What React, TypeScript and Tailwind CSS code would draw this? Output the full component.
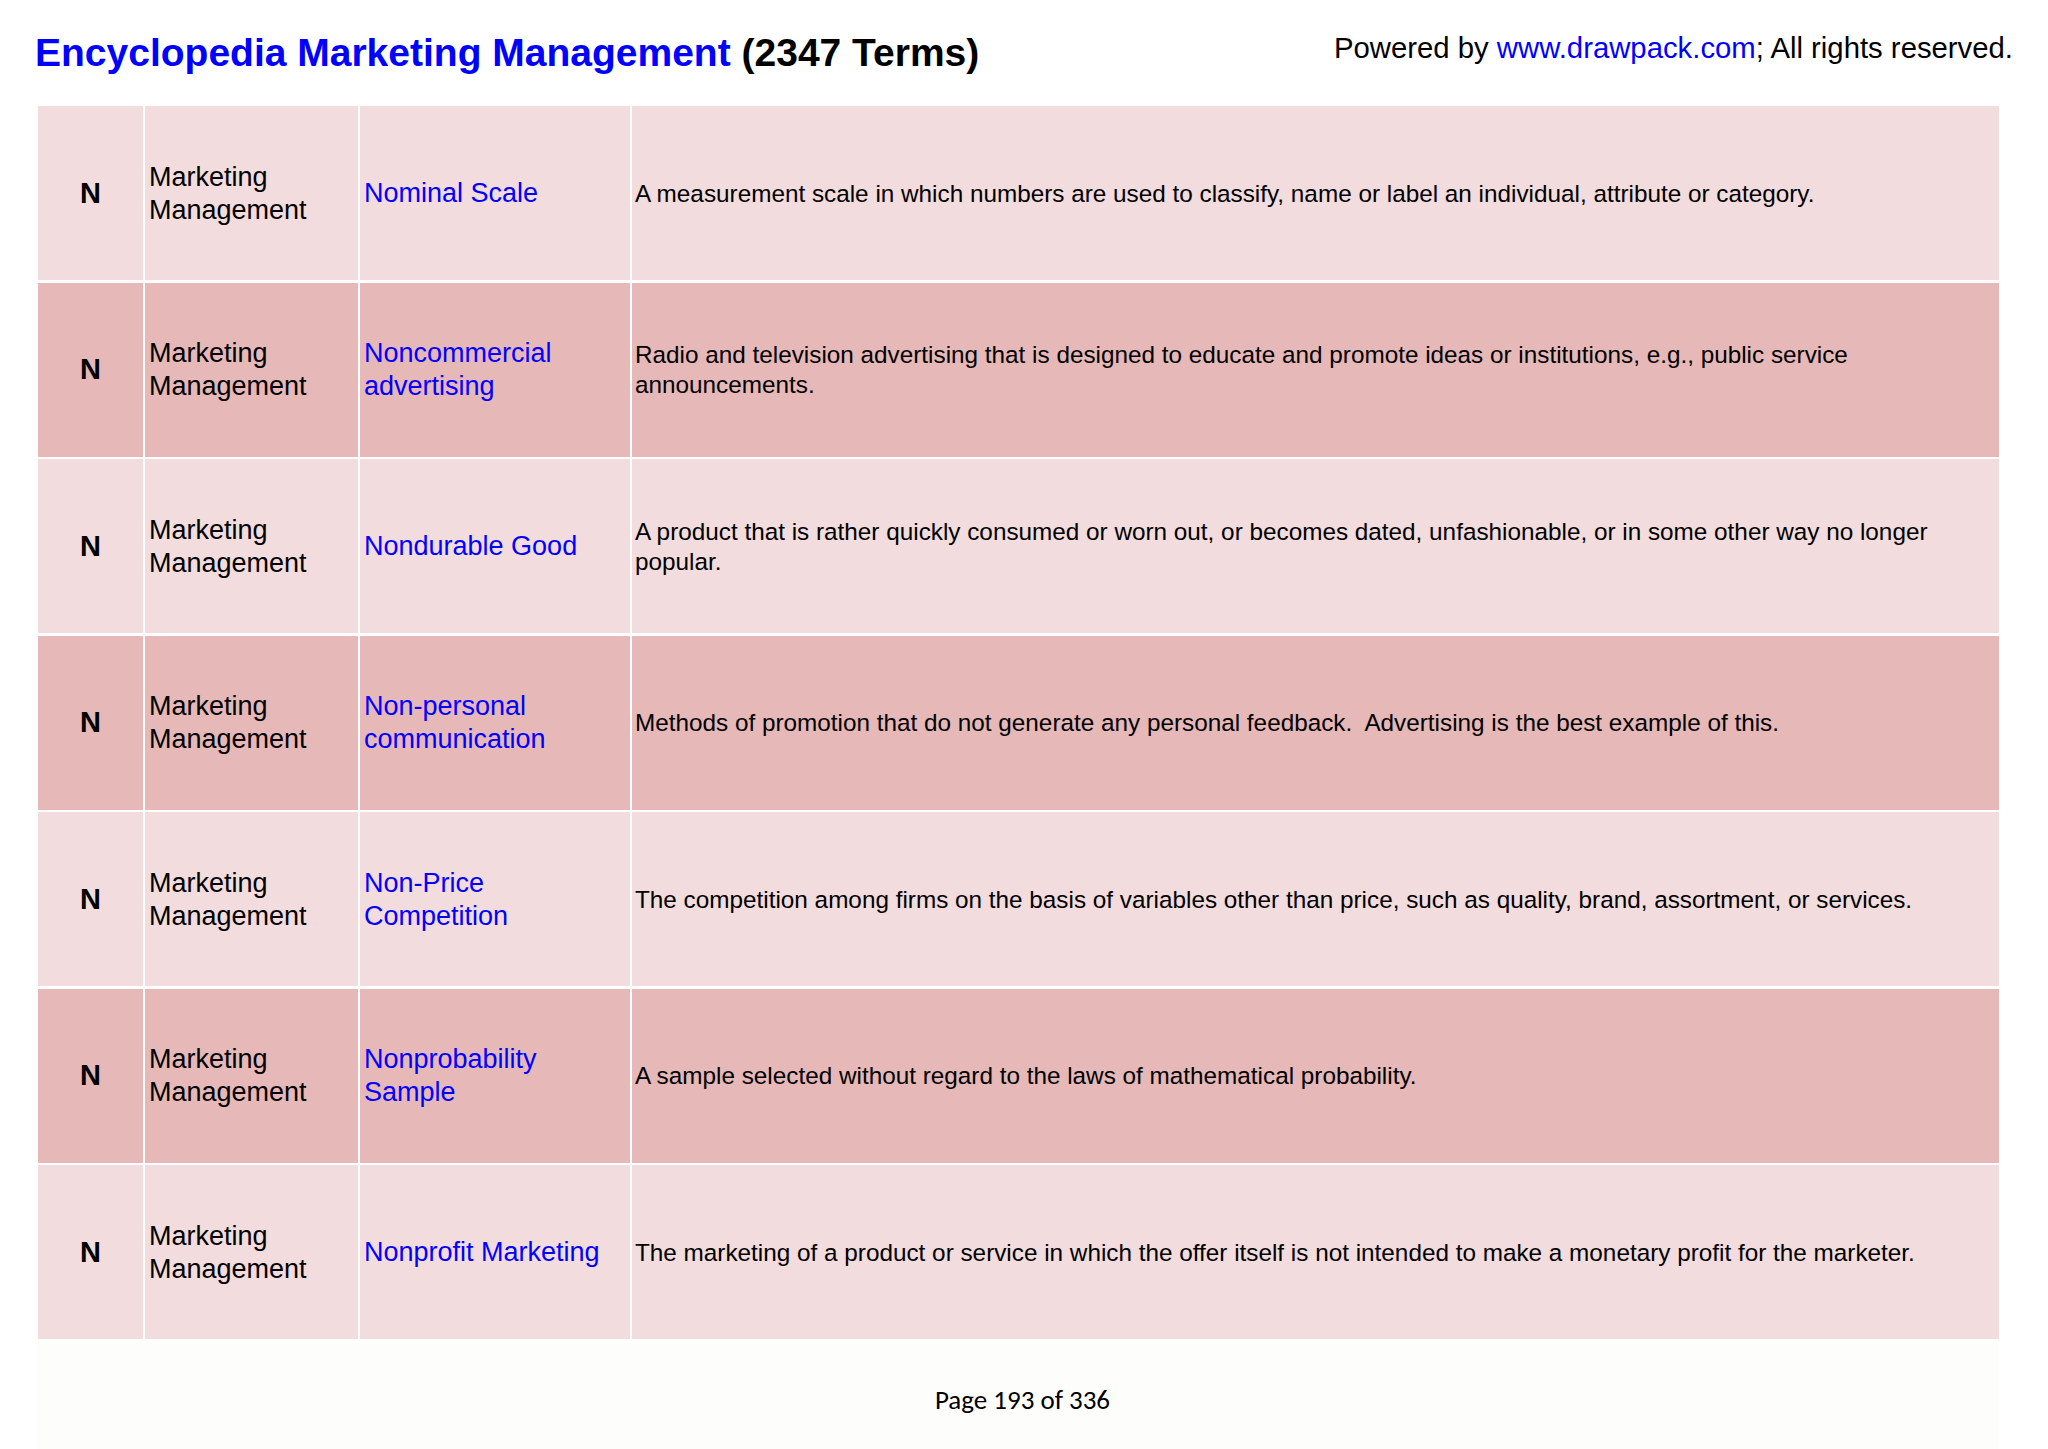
const terms = [
  {
    term: "Nominal Scale",
    text: "A measurement scale in which numbers are used to classify, name or label an individual, attribute or category.",
  },
  {
    term: "Noncommercial advertising",
    text: "Radio and television advertising that is designed to educate and promote ideas or institutions, e.g., public service announcements.",
  },
  {
    term: "Nondurable Good",
    text: "A product that is rather quickly consumed or worn out, or becomes dated, unfashionable, or in some other way no longer popular.",
  },
  {
    term: "Non-personal communication",
    text: "Methods of promotion that do not generate any personal feedback.\u00a0 Advertising is the best example of this.",
  },
  {
    term: "Non-Price Competition",
    text: "The competition among firms on the basis of variables other than price, such as quality, brand, assortment, or services.",
  },
  {
    term: "Nonprobability Sample",
    text: "A sample selected without regard to the laws of mathematical probability.",
  },
  {
    term: "Nonprofit Marketing",
    text: "The marketing of a product or service in which the offer itself is not intended to make a monetary profit for the marketer.",
  },
];

export default function App() {
  return (
    <div className="flex h-[1449px] w-[2048px] flex-col bg-white font-['Liberation_Sans',Arial,sans-serif] text-black">
      <header className="flex h-[106px] items-start justify-between pl-[35px] pr-[35px] pt-[30px]">
        <h1 className="text-[39px] font-bold leading-[46px]">
          <span className="text-[#0000ff]">Encyclopedia Marketing Management</span> (2347 Terms)
        </h1>
        <p className="pt-[1px] text-[29.3px] leading-[34px]">
          Powered by <span className="text-[#0000ff]">www.drawpack.com</span>; All rights reserved.
        </p>
      </header>

      <section className="ml-[38px] flex w-[1961px] flex-col gap-y-[2.5px]">
        {terms.map((row, i) => {
          const bg = i % 2 === 0 ? "bg-[#f2dcdd]" : "bg-[#e6b8b8]";
          return (
            <div key={row.term} className="grid h-[174px] grid-cols-[105px_213px_270px_1fr] gap-x-[2px]">
              <div className={`${bg} flex items-center justify-center pt-[1px] text-[29px] font-bold`}>N</div>
              <div className={`${bg} flex items-center pl-[4px] pt-[1px] text-[27px] leading-[33px]`}>
                Marketing Management
              </div>
              <div className={`${bg} flex items-center pl-[4px] pt-[1px] text-[27px] leading-[33px] text-[#0000ff]`}>
                {row.term}
              </div>
              <div className={`${bg} flex items-center pl-[3px] pr-[8px] pt-[1px] text-[24.3px] leading-[30px]`}>
                {row.text}
              </div>
            </div>
          );
        })}
      </section>

      <footer className="ml-[38px] mr-[49px] flex flex-1 items-center justify-center bg-[#fdfdfc] pl-[8px] pt-[12px]">
        <p className="font-['Carlito','Lato',sans-serif] text-[27px]">Page 193 of 336</p>
      </footer>
    </div>
  );
}
